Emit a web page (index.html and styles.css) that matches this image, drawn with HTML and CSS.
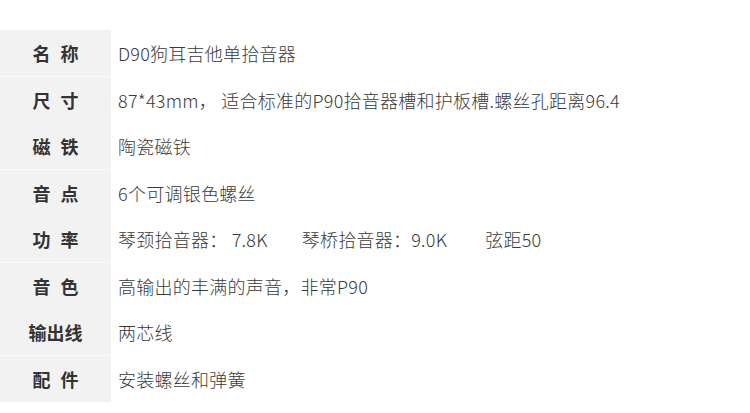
FILE: index.html
```html
<!doctype html>
<html lang="zh-CN">
  <head>
    <meta charset="utf-8">
    <meta name="viewport" content="width=device-width, initial-scale=1">
    <title>D90狗耳吉他单拾音器</title>
    <link rel="stylesheet" href="styles.css">
  </head>
  <body>
    <div class="spec-wrap">
      <table class="spec">
        <tbody>
          <tr class="odd">
            <th>名 称</th>
            <td>D90狗耳吉他单拾音器</td>
          </tr>
          <tr class="even">
            <th>尺 寸</th>
            <td>87*43mm， 适合标准的P90拾音器槽和护板槽.螺丝孔距离96.4</td>
          </tr>
          <tr class="odd">
            <th>磁 铁</th>
            <td>陶瓷磁铁</td>
          </tr>
          <tr class="even">
            <th>音 点</th>
            <td>6个可调银色螺丝</td>
          </tr>
          <tr class="odd">
            <th>功 率</th>
            <td><span class="item">琴颈拾音器： 7.8K</span><span class="item item-wide">琴桥拾音器：9.0K</span><span>弦距50</span></td>
          </tr>
          <tr class="even">
            <th>音 色</th>
            <td>高输出的丰满的声音，非常P90</td>
          </tr>
          <tr class="odd">
            <th>输出线</th>
            <td>两芯线</td>
          </tr>
          <tr class="even">
            <th>配 件</th>
            <td>安装螺丝和弹簧</td>
          </tr>
        </tbody>
      </table>
    </div>
  </body>
</html>
```

FILE: styles.css
```css
/* Reset */
* {
  margin: 0;
  padding: 0;
  box-sizing: border-box;
}

body {
  background-color: #fff;
  font-family: "Noto Sans CJK SC", "Noto Sans", sans-serif;
  color: #333;
}

.spec-wrap {
  padding-top: 30px;
}

.spec {
  width: 100%;
  border-collapse: collapse;
}

.spec th,
.spec td {
  font-size: 18px;
  line-height: 24px;
  vertical-align: middle;
  white-space: nowrap;
}

/* Label column */
.spec th {
  width: 111px;
  background-color: #f2f2f2;
  font-weight: bold;
  color: #333;
  text-align: center;
  word-spacing: 6px;
}

/* Value column */
.spec td {
  padding-left: 7px;
  color: #3a3a3a;
  font-weight: 300;
  letter-spacing: 0.25px;
}

.spec tr.odd th,
.spec tr.odd td {
  height: 46px;
}

.spec tr.even th,
.spec tr.even td {
  height: 47px;
}

.spec tr.even th {
  border-top: 1px solid #fafafa;
}

.item {
  margin-right: 34px;
}

.item-wide {
  margin-right: 38px;
}
```
